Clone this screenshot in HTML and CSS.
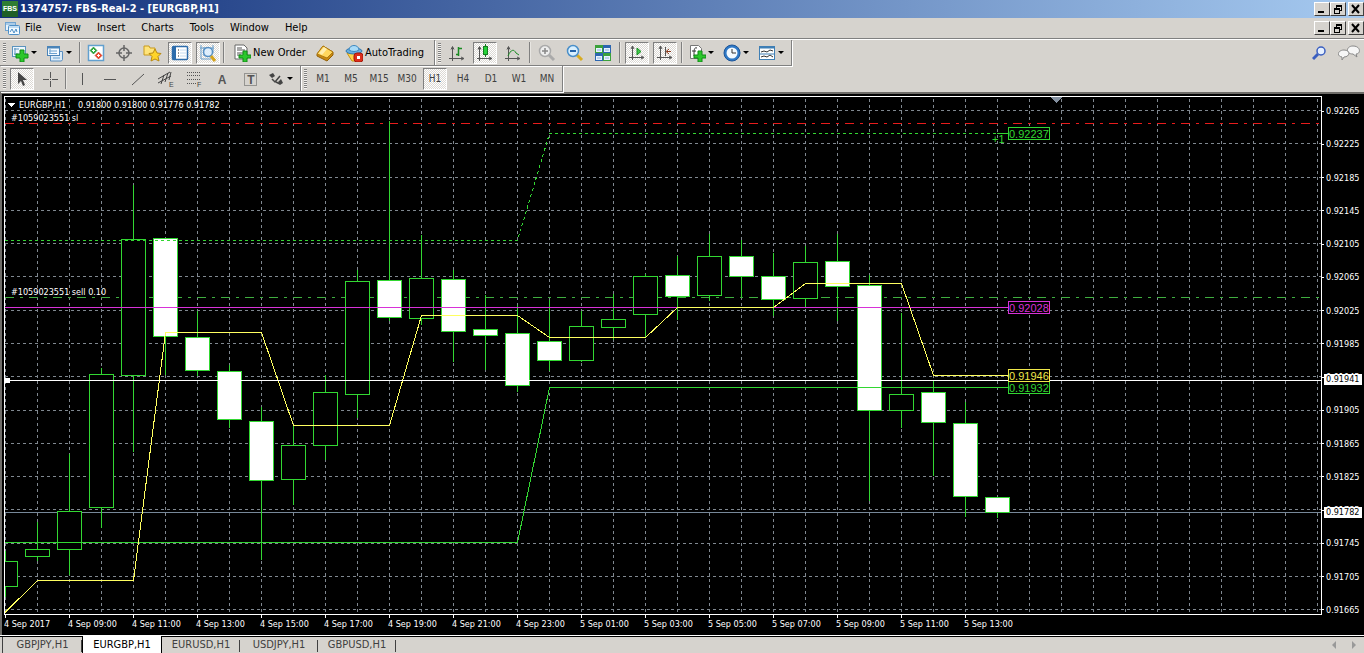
FILE: index.html
```html
<!DOCTYPE html>
<html lang="en">
<head>
<meta charset="utf-8">
<title>1374757: FBS-Real-2 - [EURGBP,H1]</title>
<link rel="stylesheet" href="styles.css">
</head>
<body>
<header class="titlebar">
  <svg class="logo" width="16" height="16" viewBox="0 0 16 16"><rect width="16" height="16" fill="#2f7d32"/><rect y="10" width="16" height="6" fill="#1f5f26"/><text class="logo-text" x="8" y="10">FBS</text></svg>
  <h1 class="title">1374757: FBS-Real-2 - [EURGBP,H1]</h1>
  <div class="winbuttons">
    <button class="winbtn" aria-label="Minimize"><svg width="12" height="10"><path d="M2 8h6" stroke="#000" stroke-width="2"/></svg></button>
    <button class="winbtn" aria-label="Restore"><svg width="12" height="10" fill="none" stroke="#000" shape-rendering="crispEdges"><path d="M4 1h6M4 2h6M4.500 1v3M9.500 1v5M8 6h2M2 4h6M2 5h6M2.500 4v5M7.500 4v5M2 9.500h6"/></svg></button>
    <button class="winbtn close" aria-label="Close"><svg width="12" height="10"><path d="M2 1l7 8M9 1l-7 8" stroke="#000" stroke-width="2"/></svg></button>
  </div>
</header>

<nav class="menubar">
  <svg class="docicon" width="15" height="15" viewBox="0 0 15 15"><rect x=".5" y="1.500" width="10" height="8" fill="#e8f4fd" stroke="#6fa3d0"/><path d="M1 3h9" stroke="#6fa3d0"/><rect x="3.500" y="4.500" width="11" height="9" rx="1" fill="#f3faff" stroke="#4d8ec6"/><path d="M4 6h10" stroke="#8fc0e6"/><path d="M5 11l2-3 2 4 2-4 1 3" fill="none" stroke="#4d8ec6"/></svg>
  <button class="menu">File</button><button class="menu">View</button><button class="menu">Insert</button><button class="menu">Charts</button><button class="menu">Tools</button><button class="menu">Window</button><button class="menu">Help</button>
  <div class="winbuttons">
    <button class="winbtn" aria-label="Minimize chart"><svg width="12" height="10"><path d="M2 8h6" stroke="#000" stroke-width="2"/></svg></button>
    <button class="winbtn" aria-label="Restore chart"><svg width="12" height="10" fill="none" stroke="#000" shape-rendering="crispEdges"><path d="M4 1h6M4 2h6M4.500 1v3M9.500 1v5M8 6h2M2 4h6M2 5h6M2.500 4v5M7.500 4v5M2 9.500h6"/></svg></button>
    <button class="winbtn close" aria-label="Close chart"><svg width="12" height="10"><path d="M2 1l7 8M9 1l-7 8" stroke="#000" stroke-width="2"/></svg></button>
  </div>
</nav>

<div class="tools">
  <div class="toolrows">
    <div class="row">
      <div class="bar">
        <i class="grip"></i>
        <button class="drop" aria-label="New chart"><svg width="18" height="18" viewBox="0 0 18 18"><rect x="1.500" y="2.500" width="13" height="10" fill="#eef7ff" stroke="#5b93bd"/><path d="M3 5h5M4 4v7M3 10h4" stroke="#5b93bd"/><path d="M9 6h4v4h4v4h-4v4h-4v-4h-4v-4h4z" fill="#2cc72c" stroke="#118a16"/></svg></button>
        <button class="drop" aria-label="Profiles"><svg width="18" height="18" viewBox="0 0 18 18"><path d="M4.500 7.500h12v8l-1 1.500h-11z" fill="#dcecf8" stroke="#5b8fc0"/><rect x="1.500" y="2.500" width="12" height="9" fill="#f4faff" stroke="#4b84b8"/><path d="M2 3.500h11" stroke="#4b84b8" stroke-width="2"/><path d="M3 7h8M4 5v5M3 9.500h8M7 14h7" stroke="#6ca2cf"/></svg></button>
        <i class="sep"></i>
        <button class="tool" aria-label="Market watch"><svg width="18" height="18" viewBox="0 0 18 18"><rect x="1.500" y="1.500" width="15" height="15" fill="#fff" stroke="#62a0cf" stroke-width="1.500"/><path d="M6.500 3l3.500 3.500-3.500 3.500-3.500-3.500z" fill="#2bab3a" stroke="#147a20" stroke-width=".5"/><path d="M11.500 8l3.500 3.500-3.500 3.500-3.500-3.500z" fill="#f0452a" stroke="#b8260d" stroke-width=".5"/><path d="M6.500 5v3M5 6.500h3M11.500 10v3M10 11.500h3" stroke="#fff"/></svg></button>
        <button class="tool" aria-label="Data window"><svg width="18" height="18" viewBox="0 0 18 18" fill="none" stroke="#666" stroke-width="1.500"><circle cx="9" cy="9" r="5"/><path d="M9 1v6M9 11v6M1 9h6M11 9h6"/></svg></button>
        <button class="tool" aria-label="Navigator"><svg width="19" height="18" viewBox="0 0 19 18"><path d="M1 2h5l1 2h5v7H1z" fill="#ffe47a" stroke="#c99a1c"/><path d="M12 5l2 4 4 .5-3 3 1 4.500-4-2-4 2 1-4.500-3-3 4-.5z" fill="#ffd42a" stroke="#b98a12"/></svg></button>
        <button class="tool pressed" aria-label="Terminal"><svg width="18" height="18" viewBox="0 0 18 18"><rect x="1.500" y="2.500" width="15" height="13" rx="1" fill="#fff" stroke="#2d6cab" stroke-width="1.500"/><path d="M3.500 3v12" stroke="#2d6cab" stroke-width="3"/><path d="M7 6h1M7 9h1M7 12h1" stroke="#222"/><path d="M9 6h6M9 9h6M9 12h6" stroke="#c6dcf0"/></svg></button>
        <button class="tool pressed" aria-label="Strategy tester"><svg width="18" height="18" viewBox="0 0 18 18"><path d="M2 1v14h10M1 4h14M5 3v9M14 1v8" fill="none" stroke="#6b9fca"/><circle cx="9" cy="8" r="4.500" fill="#dcefff" fill-opacity=".85" stroke="#5790c4" stroke-width="1.500"/><path d="M12 12l4 5" stroke="#d5a41d" stroke-width="3"/></svg></button>
        <i class="sep"></i>
        <button class="wide order"><svg width="18" height="18" viewBox="0 0 18 18"><path d="M2 1h9l3 3v11H2z" fill="#fff" stroke="#666"/><path d="M4 4h5M4 6h8M4 9h8M4 11h4" stroke="#555"/><path d="M10 7h4v4h4v3h-4v4h-4v-4h-4v-3h4z" fill="#2cc72c" stroke="#118a16"/></svg>New Order</button>
        <button class="tool" aria-label="MetaEditor"><svg width="18" height="18" viewBox="0 0 18 18"><path d="M1 10l6-8 10 6v3l-6 6-10-5z" fill="#c98a12" stroke="#94620a"/><path d="M1 10l6-8 10 6-6 6z" fill="#ffd75e" stroke="#b07a10"/><path d="M3 9l5-6 3 2-5 6z" fill="#ffeeb0"/></svg></button>
        <button class="wide auto"><svg width="18" height="18" viewBox="0 0 18 18"><path d="M2 9h14l-5 8h-4z" fill="#ffd34a" stroke="#c89413"/><ellipse cx="9" cy="7" rx="8" ry="3" fill="#67aee0" stroke="#2f77b0"/><path d="M4 6c0-6 10-6 10 0-3 2-7 2-10 0z" fill="#a9dbf8" stroke="#3d88bf"/><rect x="9" y="9" width="9" height="9" rx="3" fill="#dd2e1c" stroke="#a51708"/><rect x="12" y="12" width="3" height="3" fill="#fff"/></svg>AutoTrading</button>
      </div>
      <div class="bar charting">
        <i class="grip"></i>
        <button class="tool" aria-label="Bar chart"><svg width="18" height="18" viewBox="0 0 18 18" fill="none" stroke="#555"><path d="M4.500 3v14M1 14.500h14M3 5.500l1.500-3 1.500 3M13 13l3 1.500-3 1.500"/><path d="M10.500 3v9M8 10.500h2M11 4.500h3" stroke="#198b22" stroke-width="1.500"/></svg></button>
        <button class="tool pressed" aria-label="Candlesticks"><svg width="18" height="18" viewBox="0 0 18 18" fill="none" stroke="#555"><path d="M3.500 3v14M1 14.500h14M2 5.500l1.500-3 1.500 3M13 13l3 1.500-3 1.500"/><path d="M9.500 0v13" stroke="#157c20"/><rect x="7.500" y="2.500" width="4" height="8" fill="#25d238" stroke="#157c20"/></svg></button>
        <button class="tool" aria-label="Line chart"><svg width="18" height="18" viewBox="0 0 18 18" fill="none" stroke="#555"><path d="M4.500 3v14M1 14.500h14M3 5.500l1.500-3 1.500 3M13 13l3 1.500-3 1.500"/><path d="M4 12c3-7 6-7 8-3l3 2" stroke="#198b22"/></svg></button>
        <i class="sep"></i>
        <button class="tool" aria-label="Zoom in"><svg width="18" height="18" viewBox="0 0 18 18"><path d="M11 11l5 5" stroke="#aaa" stroke-width="3"/><circle cx="7" cy="7" r="5.500" fill="#eee" stroke="#aaa" stroke-width="1.500"/><path d="M4 7h6M7 4v6" stroke="#888" stroke-width="1.500"/></svg></button>
        <button class="tool" aria-label="Zoom out"><svg width="18" height="18" viewBox="0 0 18 18"><path d="M11 11l5 5" stroke="#d8ac21" stroke-width="3"/><circle cx="7" cy="7" r="5.500" fill="#d9f0ff" stroke="#4a8fc9" stroke-width="1.500"/><path d="M4 7h6" stroke="#2464a8" stroke-width="2"/></svg></button>
        <button class="tool" aria-label="Tile windows"><svg width="18" height="18" viewBox="0 0 18 18"><rect x="1" y="1" width="8" height="8" fill="#3ba13b"/><rect x="9" y="1" width="8" height="8" fill="#2c66b0"/><rect x="1" y="9" width="8" height="8" fill="#2c66b0"/><rect x="9" y="9" width="8" height="8" fill="#3ba13b"/><path d="M2 4h6v4H2zM10 4h6v4h-6zM2 12h6v4H2zM10 12h6v4h-6z" fill="#e9f3ff"/><path d="M3 6h4M3 14h4M11 6h4M11 14h4" stroke="#8fb4da"/></svg></button>
        <i class="sep"></i>
        <button class="tool pressed" aria-label="Auto scroll"><svg width="18" height="18" viewBox="0 0 18 18" fill="none" stroke="#555"><path d="M4.500 2v14M1 13.500h14M3 5l1.500-3 1.500 3M13 12l3 1.500-3 1.500"/><path d="M9 4l4 3.500-4 3.500z" fill="#3fca4a" stroke="#198b22"/></svg></button>
        <button class="tool pressed" aria-label="Chart shift"><svg width="18" height="18" viewBox="0 0 18 18" fill="none" stroke="#555"><path d="M4.500 2v14M1 13.500h14M3 5l1.500-3 1.500 3M13 12l3 1.500-3 1.500M9.500 3v9"/><path d="M15 7.500h-4M13 5l-3 2.500 3 2.500" stroke="#8a3a1c"/></svg></button>
        <i class="sep"></i>
        <button class="drop" aria-label="Indicators"><svg width="18" height="18" viewBox="0 0 18 18"><path d="M2.500 1.500h8l3 3v10h-11z" fill="#fff" stroke="#777"/><path d="M9 4c-3-1-3 2-3 8M4 7h4" fill="none" stroke="#333"/><path d="M10 7h4v4h4v3h-4v4h-4v-4h-4v-3h4z" fill="#2cc72c" stroke="#118a16"/></svg></button>
        <button class="drop" aria-label="Periods"><svg width="18" height="18" viewBox="0 0 18 18"><circle cx="9" cy="9" r="8" fill="#2f79c6" stroke="#1c559a"/><circle cx="9" cy="9" r="5.500" fill="#f4faff"/><path d="M9 5v4h4" fill="none" stroke="#333"/></svg></button>
        <button class="drop" aria-label="Templates"><svg width="18" height="18" viewBox="0 0 18 18"><rect x="1.500" y="2.500" width="15" height="13" fill="#fff" stroke="#3f7fb5"/><path d="M1 3.500h16" stroke="#3f7fb5" stroke-width="2"/><path d="M3 8l3-1 3 1 3-2 3 1M3 13l3-1 3 1 3-2 3 2" fill="none" stroke="#333"/><path d="M2 10h14" stroke="#3f7fb5"/></svg></button>
      </div>
    </div>
    <div class="row">
      <div class="bar">
        <i class="grip"></i>
        <button class="tool pressed" aria-label="Cursor"><svg width="18" height="18" viewBox="0 0 18 18"><path d="M5 2v12l3-3 2 5 2-1-2-5h4z" fill="#444"/></svg></button>
        <button class="tool" aria-label="Crosshair"><svg width="18" height="18" viewBox="0 0 18 18" stroke="#555"><path d="M9.500 2v6M9.500 11v6M2 9.500h6M11 9.500h6M9 9.500h1"/></svg></button>
        <i class="sep"></i>
        <button class="tool" aria-label="Vertical line"><svg width="18" height="18" viewBox="0 0 18 18" stroke="#555"><path d="M9.500 3v12"/></svg></button>
        <button class="tool" aria-label="Horizontal line"><svg width="18" height="18" viewBox="0 0 18 18" stroke="#555"><path d="M3 9.500h12"/></svg></button>
        <button class="tool" aria-label="Trendline"><svg width="18" height="18" viewBox="0 0 18 18" stroke="#555"><path d="M3 15L15 4"/></svg></button>
        <button class="tool" aria-label="Equidistant channel"><svg width="18" height="18" viewBox="0 0 18 18" fill="none" stroke="#444"><path d="M1 9L13 2M1 13l13-7M4 14l3-9M8 12l3-9M12 10l2-8"/><text class="tag" x="12" y="17">E</text></svg></button>
        <button class="tool" aria-label="Fibonacci retracement"><svg width="18" height="18" viewBox="0 0 18 18" fill="none" stroke="#555"><path d="M2 2.500h14M2 5.500h14M2 9.500h14M2 13.500h9" stroke-dasharray="1 1"/><text class="tag" x="12" y="17">F</text></svg></button>
        <button class="tool" aria-label="Text"><svg width="18" height="18" viewBox="0 0 18 18"><text class="letter" x="9" y="14">A</text></svg></button>
        <button class="tool" aria-label="Text label"><svg width="18" height="18" viewBox="0 0 18 18"><rect x="3.500" y="3.500" width="12" height="12" fill="none" stroke="#555" stroke-dasharray="1 1"/><text class="letter" x="10" y="14">T</text></svg></button>
        <button class="drop" aria-label="Arrows"><svg width="18" height="18" viewBox="0 0 18 18"><path d="M2 5l4-2 2 3-3 2zM11 12l3-3 2 4-3 2z" fill="#444"/><path d="M5 9l3 3 5-6M9 12l4 2" fill="none" stroke="#444" stroke-width="1.500"/></svg></button>
      </div>
      <div class="bar">
        <i class="grip"></i>
        <button class="period">M1</button><button class="period">M5</button><button class="period">M15</button><button class="period">M30</button><button class="period pressed">H1</button><button class="period">H4</button><button class="period">D1</button><button class="period">W1</button><button class="period">MN</button>
      </div>
    </div>
  </div>
  <div class="aside">
    <button class="plain" aria-label="Search"><svg width="16" height="16" viewBox="0 0 16 16"><path d="M6 9l-5 5" stroke="#3b5fc0" stroke-width="3"/><circle cx="9" cy="6" r="4" fill="#e6f0ff" stroke="#3b5fc0" stroke-width="1.500"/></svg></button>
    <button class="plain" aria-label="Chat"><svg width="22" height="16" viewBox="0 0 22 16"><path d="M15 1c8 0 8 8 3 8l1 3-4-3c-8 0-7-8 0-8z" fill="#f6f6f6" stroke="#888"/><path d="M6 5c7 0 6 7 0 7l-2 3v-3c-6-1-4-7 2-7z" fill="#f6f6f6" stroke="#888"/></svg></button>
  </div>
</div>

<main class="chart">
  <div class="plot">
    <svg class="canvas" shape-rendering="crispEdges">
      <defs>
        <pattern id="vgrid" x="37" y="99" width="32" height="6" patternUnits="userSpaceOnUse"><rect width="1" height="3" fill="#808890"/></pattern>
      </defs>
      <g transform="translate(-5 -97)">
        <rect x="5" y="97" width="100%" height="100%" fill="url(#vgrid)"/>
        <path class="grid" d="M5 110.500H3000M5 143.500H3000M5 177.500H3000M5 210.500H3000M5 243.500H3000M5 276.500H3000M5 310.500H3000M5 343.500H3000M5 376.500H3000M5 410.500H3000M5 443.500H3000M5 476.500H3000M5 509.500H3000M5 543.500H3000M5 576.500H3000M5 609.500H3000"/>
        <path class="ask" d="M5 512.500H3000"/>
        <path class="stop" d="M5 123.500H3000"/>
        <path class="entry" d="M5 297.500H3000"/>
        <path class="wick" d="M5.500 551V597M37.500 522V561M69.500 454V575M101.500 368V528M133.500 185V452M165.500 238V375M197.500 311V376M229.500 365V428M261.500 407V560M293.500 425V505M325.500 375V460M357.500 270V418M389.500 121V321M421.500 235V325M453.500 270V362M485.500 295V370M517.500 305V392M549.500 300V371M581.500 311V362M613.500 294V340M645.500 274V338M677.500 256V320M709.500 234V301M741.500 240V297M773.500 253V316M805.500 246V307M837.500 234V321M869.500 275V501M901.500 313V428M933.500 380V476M965.500 402V517M997.500 497V518"/>
        <path class="up" d="M-6.500 561.500h24v25h-24zM25.500 549.500h24v7h-24zM57.500 511.500h24v38h-24zM89.500 374.500h24v133h-24zM121.500 239.500h24v136h-24zM281.500 445.500h24v34h-24zM313.500 392.500h24v53h-24zM345.500 281.500h24v113h-24zM409.500 278.500h24v40h-24zM569.500 326.500h24v34h-24zM601.500 319.500h24v8h-24zM633.500 276.500h24v38h-24zM697.500 256.500h24v39h-24zM793.500 262.500h24v36h-24zM889.500 394.500h24v16h-24z"/>
        <path class="down" d="M153.500 238.500h24v98h-24zM185.500 337.500h24v33h-24zM217.500 371.500h24v48h-24zM249.500 421.500h24v59h-24zM377.500 280.500h24v37h-24zM441.500 279.500h24v52h-24zM473.500 329.500h24v6h-24zM505.500 333.500h24v52h-24zM537.500 341.500h24v19h-24zM665.500 275.500h24v21h-24zM729.500 256.500h24v20h-24zM761.500 276.500h24v23h-24zM825.500 261.500h24v25h-24zM857.500 285.500h24v125h-24zM921.500 392.500h24v30h-24zM953.500 423.500h24v73h-24zM985.500 497.500h24v15h-24z"/>
        <path class="upper" d="M5 240.500H517.500L549.500 133.500H997"/>
        <path class="lower" d="M5 542.500H517.500L549.500 387.500H1008M997 133.500H1008"/>
        <path class="middle" d="M5 307.500H1008"/>
        <path class="average" d="M5 612.500L37.500 580.500H133.500L165.500 332.500H261.500L293.500 425.500H389.500L421.500 315.500H517.500L549.500 337.500H645.500L677.500 307.500H773.500L805.500 283.500H901.500L933.500 375.500H1008"/>
        <path class="level" d="M5 380.500H3000"/>
        <rect class="handle" x="5" y="378" width="5" height="5"/>
        <path class="shift" d="M1051 97h11l-5.500 6z"/>
        <g class="value green"><rect x="1008.500" y="127.500" width="41" height="12"/><text x="1009" y="138">0.92237</text><text x="992" y="143">+1</text></g>
        <g class="value magenta"><rect x="1008.500" y="301.500" width="41" height="12"/><text x="1009" y="312">0.92028</text></g>
        <g class="value green"><rect x="1008.500" y="381.500" width="41" height="12"/><text x="1009" y="392">0.91932</text></g>
        <g class="value yellow"><rect x="1008.500" y="369.500" width="41" height="12"/><text x="1009" y="380">0.91946</text></g>
        <path class="handle" d="M7 103h8l-4 4z"/>
        <g class="note"><text x="19" y="108">EURGBP,H1</text><text x="78" y="108">0.91800 0.91800 0.91776 0.91782</text><text x="11" y="121">#1059023551 sl</text><text x="11" y="295">#1059023551 sell 0.10</text></g>
      </g>
    </svg>
  </div>
  <div class="prices">
    <span>0.92265</span><span>0.92225</span><span>0.92185</span><span>0.92145</span><span>0.92105</span><span>0.92065</span><span>0.92025</span><span>0.91985</span><span>0.91945</span><span>0.91905</span><span>0.91865</span><span>0.91825</span><span>0.91785</span><span>0.91745</span><span>0.91705</span><span>0.91665</span>
    <b class="mark level-mark">0.91941</b>
    <b class="mark bid-mark">0.91782</b>
  </div>
  <div class="times">
    <span>4 Sep 2017</span><span>4 Sep 09:00</span><span>4 Sep 11:00</span><span>4 Sep 13:00</span><span>4 Sep 15:00</span><span>4 Sep 17:00</span><span>4 Sep 19:00</span><span>4 Sep 21:00</span><span>4 Sep 23:00</span><span>5 Sep 01:00</span><span>5 Sep 03:00</span><span>5 Sep 05:00</span><span>5 Sep 07:00</span><span>5 Sep 09:00</span><span>5 Sep 11:00</span><span>5 Sep 13:00</span>
  </div>
</main>

<footer class="tabs">
  <button class="tab">GBPJPY,H1</button><button class="tab active">EURGBP,H1</button><button class="tab">EURUSD,H1</button><button class="tab">USDJPY,H1</button><button class="tab">GBPUSD,H1</button>
  <div class="scroll">
    <button class="plain" aria-label="Scroll left"><svg width="8" height="8"><path d="M6 0v8l-4-4z" fill="#999"/></svg></button>
    <button class="plain" aria-label="Scroll right"><svg width="8" height="8"><path d="M2 0v8l4-4z" fill="#999"/></svg></button>
  </div>
</footer>
</body>
</html>
```

FILE: styles.css
```css
* { box-sizing: border-box; }

body {
  margin: 0;
  min-height: 100vh;
  display: flex;
  flex-direction: column;
  background: #d6d3ce;
  color: #000;
  font: 11px/14px "DejaVu Sans Condensed", "DejaVu Sans", sans-serif;
  overflow: hidden;
}

button {
  margin: 0;
  padding: 0;
  border: 0;
  background: none;
  color: inherit;
  font: inherit;
}

svg { display: block; flex: none; }

.titlebar {
  display: flex;
  align-items: center;
  height: 18px;
  padding: 0 0 0 2px;
  background: linear-gradient(to right, #12307a, #a6caf0);
}
.title {
  margin: 0 auto 0 2px;
  color: #fff;
  font-size: 11px;
  line-height: 18px;
  font-weight: bold;
}
.logo-text { font: bold 7px "Liberation Sans", sans-serif; fill: #fff; text-anchor: middle; }

.winbuttons { display: flex; margin-left: auto; }
.winbtn {
  display: grid;
  place-items: center;
  width: 16px;
  height: 14px;
  background: #d6d3ce;
  border: 1px solid;
  border-color: #fff #404040 #404040 #fff;
}
.winbtn.close { margin-left: 2px; }

.menubar {
  display: flex;
  align-items: center;
  gap: 16px;
  height: 21px;
  padding-left: 5px;
  border-bottom: 1px solid #808080;
}
.docicon { margin-right: -11px; }

.tools {
  display: flex;
  height: 55px;
  border-top: 1px solid #fff;
  border-bottom: 2px solid #6e6c68;
}
.toolrows { flex: 1; }
.row { display: flex; height: 26px; }
.bar {
  display: flex;
  align-items: center;
  gap: 4px;
  padding: 0 3px;
  border-right: 1px solid #808080;
  border-bottom: 1px solid #808080;
  box-shadow: 1px 1px 0 #fff;
}
.grip {
  flex: none;
  width: 3px;
  height: 20px;
  background: repeating-linear-gradient(#808080 0 1px, #f4f2ee 1px 2px);
}
.sep {
  flex: none;
  width: 2px;
  height: 21px;
  margin: 0 -1px;
  border-left: 1px solid #808080;
  border-right: 1px solid #e8e6e2;
}
.charting .sep { margin: 0; }

.tool, .period {
  display: grid;
  place-items: center;
  flex: none;
  width: 24px;
  height: 22px;
}
.period { color: #404040; font-size: 10px; white-space: nowrap; }
.pressed {
  background: repeating-conic-gradient(#fff 0 25%, #dcd9d4 0 50%) 0 0 / 2px 2px;
  border: 1px solid;
  border-color: #808080 #fff #fff #808080;
}
.drop {
  display: flex;
  align-items: center;
  gap: 2px;
  width: 31px;
  height: 22px;
  padding-left: 1px;
}
.drop::after {
  content: "";
  border: 3px solid transparent;
  border-top-color: #000;
  border-bottom: 0;
}
.wide {
  display: flex;
  align-items: center;
  gap: 2px;
  height: 22px;
  white-space: nowrap;
}
.order { width: 81px; padding-left: 5px; }
.auto { width: 90px; padding-left: 4px; }
.tag { font: 7px "Liberation Sans", sans-serif; fill: #444; stroke: none; }
.letter { font: bold 12px "Liberation Sans", sans-serif; fill: #555; text-anchor: middle; }
.tool svg { overflow: visible; }

.aside {
  display: flex;
  align-items: center;
  gap: 10px;
  height: 26px;
  padding-right: 4px;
}

.chart {
  flex: 1;
  min-height: 0;
  display: grid;
  grid-template-columns: minmax(0, 1fr) 42px;
  grid-template-rows: minmax(0, 1fr) 20px;
  padding: 2px 0 0 2px;
  border-left: 2px solid #6e6c68;
  background: #000;
  color: #fff;
  font-size: 9px;
  line-height: 10px;
}
.plot { border: 1px solid #fff; min-height: 0; }
.canvas { width: 100%; height: 100%; }

.canvas path { fill: none; stroke-width: 1px; }
.canvas .grid { stroke: #808890; stroke-dasharray: 3 3; }
.canvas .ask { stroke: #778899; }
.canvas .stop { stroke: #e81c1c; stroke-dasharray: 9 6 3 6; }
.canvas .entry { stroke: #3fae3f; stroke-dasharray: 9 6 3 6; }
.canvas .wick { stroke: #32d732; }
.canvas .up { fill: #000; stroke: #32d732; }
.canvas .down { fill: #fff; stroke: #32d732; }
.canvas .upper { stroke: #32d732; stroke-dasharray: 3 3; }
.canvas .lower { stroke: #32d732; }
.canvas .middle { stroke: #d832d8; }
.canvas .average { stroke: #ffff60; }
.canvas .level { stroke: #fff; }
.canvas .handle { fill: #fff; }
.canvas .shift { fill: #8490a0; }
.value { font: 11px "Liberation Sans", sans-serif; }
.value rect { fill: #000; }
.green rect { stroke: #32d732; }
.green text { fill: #32d732; }
.magenta rect { stroke: #d832d8; }
.magenta text { fill: #d832d8; }
.yellow rect { stroke: #f0e84a; }
.yellow text { fill: #f0e84a; }
.note { fill: #fff; }

.prices {
  position: relative;
  display: flex;
  flex-direction: column;
  justify-content: space-between;
  padding: 10px 0 0;
}
.prices span { display: flex; align-items: center; gap: 2px; }
.prices span::before { content: ""; width: 2px; height: 1px; background: #fff; }
.mark {
  position: absolute;
  left: 2px;
  padding: 0 2px;
  width: 38px;
  height: 11px;
  background: #fff;
  color: #000;
  font-weight: normal;
  line-height: 11px;
}
.level-mark { top: 278px; }
.bid-mark { top: 411px; }

.times { grid-column: 1 / -1; display: flex; overflow: hidden; }
.times span { flex: none; width: 64px; white-space: nowrap; }
.times span::before {
  content: "";
  display: block;
  width: 1px;
  height: 3px;
  margin: 0 0 1px 1px;
  background: #fff;
}

.tabs {
  display: flex;
  height: 18px;
  padding-left: 2px;
  border-top: 1px solid #fff;
  color: #404040;
  box-shadow: inset 0 1px 0 #000;
}
.tab {
  position: relative;
  width: 78px;
  margin-top: 1px;
  line-height: 16px;
}
.tab:first-child { width: 80px; border-left: 1px solid #404040; }
.tab:not(.active)::after {
  content: "";
  position: absolute;
  right: 0;
  top: 3px;
  width: 1px;
  height: 12px;
  background: #404040;
}
.tab.active {
  width: 80px;
  margin-top: 0;
  padding-top: 1px;
  background: #fff;
  color: #000;
  border: 1px solid #000;
  border-width: 0 1px;
}
.scroll { display: flex; align-items: center; gap: 12px; margin-left: auto; padding-right: 6px; }
```
